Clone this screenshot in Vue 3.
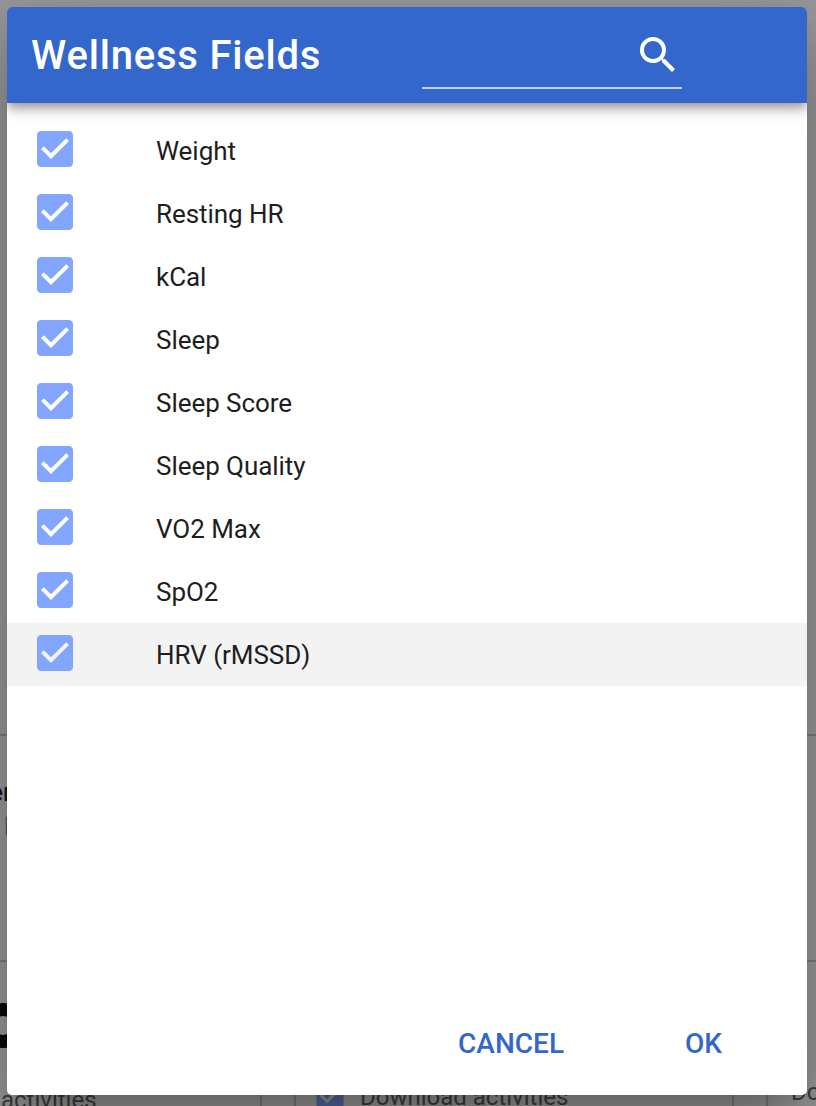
<script setup>
import { ref } from 'vue'

const fields = ref([
  { name: 'Weight' },
  { name: 'Resting HR' },
  { name: 'kCal' },
  { name: 'Sleep' },
  { name: 'Sleep Score' },
  { name: 'Sleep Quality' },
  { name: 'VO2 Max' },
  { name: 'SpO2' },
  { name: 'HRV (rMSSD)', hover: true },
])
const box =
  'M10,17L5,12L6.41,10.58L10,14.17L17.59,6.58L19,8M19,3H5C3.89,3 3,3.89 3,5V19C3,20.1 3.9,21 5,21H19C20.1,21 21,20.1 21,19V5C21,3.89 20.1,3 19,3Z'
</script>

<template>
  <div class="screen">
    <div class="page">
      <div class="band first"></div>
      <div class="band second">
        <div class="heading">er</div>
        <div class="sub">l</div>
      </div>
      <div class="cards">
        <div class="card left">
          <svg class="brand" viewBox="0 0 50 45">
            <circle cx="25" cy="22.5" r="16" />
          </svg>
          <div class="caption">activities</div>
        </div>
        <div class="card middle">
          <svg class="mini" viewBox="0 0 24 24"><path :d="box" /></svg>
          <span>Download activities</span>
        </div>
        <div class="card right"><span>Do</span></div>
      </div>
    </div>
    <div class="dialog">
      <header class="toolbar">
        <h1>Wellness Fields</h1>
        <div class="search">
          <svg viewBox="0 0 24 24">
            <path d="M9.5,3A6.5,6.5 0 0,1 16,9.5C16,11.11 15.41,12.59 14.44,13.73L14.71,14H15.5L20.5,19L19,20.5L14,15.5V14.71L13.73,14.44C12.59,15.41 11.11,16 9.5,16A6.5,6.5 0 0,1 3,9.5A6.5,6.5 0 0,1 9.5,3M9.5,5C7,5 5,7 5,9.5C5,12 7,14 9.5,14C12,14 14,12 14,9.5C14,7 12,5 9.5,5Z" />
          </svg>
        </div>
      </header>
      <ul class="list">
        <li v-for="f in fields" :key="f.name" :class="{ hover: f.hover }">
          <svg viewBox="0 0 24 24"><path :d="box" /></svg>
          <span>{{ f.name }}</span>
        </li>
      </ul>
      <footer class="actions">
        <span class="btn cancel">CANCEL</span>
        <span class="btn">OK</span>
      </footer>
    </div>
  </div>
</template>

<style>
body {
  margin: 0;
  overflow: hidden;
}
</style>

<style scoped>
* {
  box-sizing: border-box;
}
.screen {
  position: relative;
  width: 816px;
  height: 1106px;
  overflow: hidden;
  background: #999;
  font-family: Roboto, "Liberation Sans", sans-serif;
}
.page {
  display: flex;
  flex-direction: column;
  height: 1106px;
}
.band {
  border-bottom: 2px solid #7c7c7c;
  flex: none;
}
.first {
  height: 736px;
}
.second {
  height: 226px;
  padding-top: 39px;
}
.heading {
  margin-left: -11px;
  font-size: 26px;
  line-height: 34px;
  font-weight: 500;
  color: #161616;
}
.sub {
  margin-left: 4px;
  font-size: 24px;
  line-height: 36px;
  color: #555;
}
.cards {
  display: flex;
  flex: 1;
  min-height: 0;
  color: #3d3d3d;
  font-size: 24px;
  line-height: 28px;
  white-space: nowrap;
}
.card {
  flex: none;
  overflow: hidden;
}
.left {
  width: 262px;
  border-right: 2px solid #7c7c7c;
}
.brand {
  display: block;
  width: 50px;
  height: 45px;
  margin: 41px 0 38px -22px;
  fill: none;
  stroke: #0b0b0b;
  stroke-width: 13px;
}
.caption {
  padding-left: 1px;
}
.middle {
  display: flex;
  width: 440px;
  margin: 0 32px;
  padding: 121px 0 0 16px;
  border: solid #7c7c7c;
  border-width: 0 2px;
}
.middle span {
  margin-left: 12px;
}
.mini {
  flex: none;
  width: 36px;
  height: 36px;
  margin-top: -5px;
  fill: #5268a2;
}
.right {
  flex: 1;
  padding: 116px 0 0 23px;
  border-left: 2px solid #7c7c7c;
}
.dialog {
  position: absolute;
  top: 7px;
  left: 7px;
  display: flex;
  flex-direction: column;
  width: 800px;
  height: 1088px;
  overflow: hidden;
  border-radius: 5px;
  background: #fff;
  box-shadow: 0 22px 30px -14px rgba(0, 0, 0, 0.2), 0 48px 76px 6px rgba(0, 0, 0, 0.14),
    0 18px 92px 16px rgba(0, 0, 0, 0.12);
}
.toolbar {
  position: relative;
  display: flex;
  flex: none;
  height: 96px;
  padding-left: 24px;
  background: #3367cc;
  box-shadow: 0 4px 8px -2px rgba(0, 0, 0, 0.24), 0 8px 10px 0 rgba(0, 0, 0, 0.16),
    0 2px 20px 0 rgba(0, 0, 0, 0.14);
}
h1 {
  width: 391px;
  margin: 0;
  font-size: 40px;
  font-weight: 500;
  line-height: 98px;
  letter-spacing: 0.8px;
  color: #fff;
}
.search {
  display: flex;
  justify-content: flex-end;
  width: 260px;
  height: 82px;
  padding-top: 24px;
  border-bottom: 2px solid rgba(255, 255, 255, 0.7);
}
.search svg {
  width: 48px;
  height: 48px;
  fill: #fff;
}
.list {
  margin: 0;
  padding: 16px 0 0;
  list-style: none;
}
li {
  display: flex;
  height: 63px;
  padding-left: 24px;
  font-size: 26px;
  line-height: 64px;
  letter-spacing: -0.05px;
  color: #1e1e1e;
}
li.hover {
  background: #f3f3f3;
}
li svg {
  width: 48px;
  height: 48px;
  margin: 6px 77px 0 0;
  fill: #82a5ff;
}
.actions {
  display: flex;
  justify-content: flex-end;
  margin-top: auto;
  padding: 0 85px 33px 0;
  font-size: 28px;
  font-weight: 500;
  line-height: 36px;
  color: #3367cc;
}
.cancel {
  margin-right: 121px;
}
</style>
